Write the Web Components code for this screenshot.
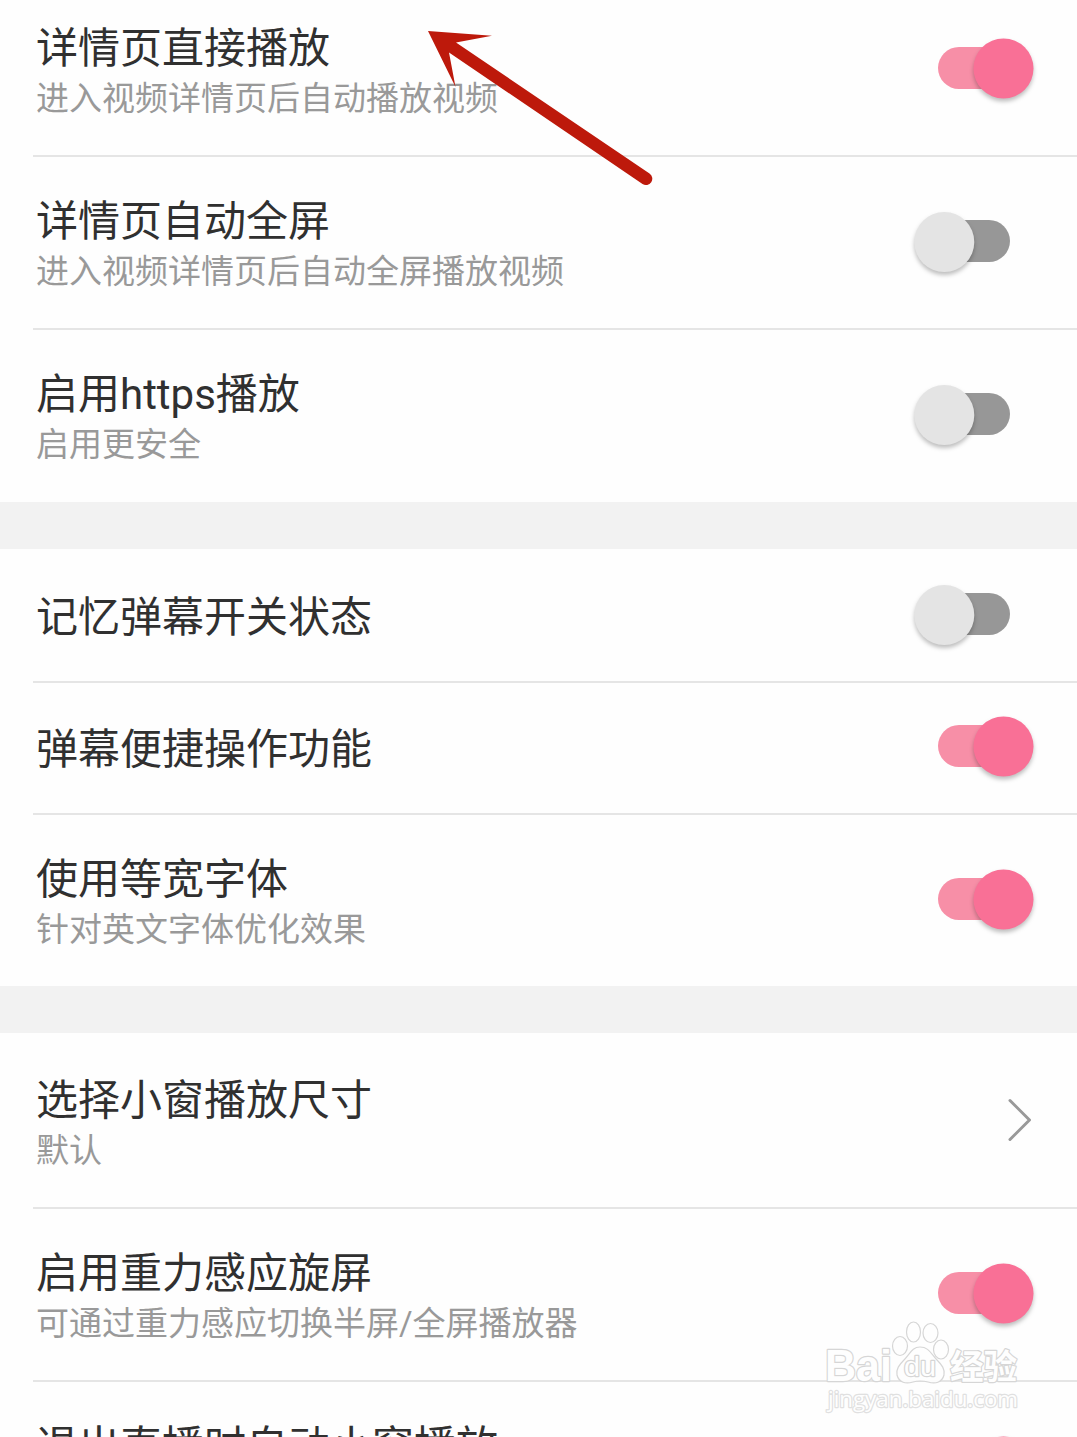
<!DOCTYPE html>
<html lang="zh-CN">
<head>
<meta charset="utf-8">
<title>播放设置</title>
<style>
html,body{margin:0;background:#fefefe}
body{width:1077px;height:1437px;overflow:hidden;position:relative;font-family:Roboto,"Noto Sans CJK SC",sans-serif}
</style>
</head>
<body>
<settings-page>
  <settings-group class="first">
    <settings-row label="详情页直接播放" note="进入视频详情页后自动播放视频"><toggle-switch on></toggle-switch></settings-row>
    <settings-row label="详情页自动全屏" note="进入视频详情页后自动全屏播放视频"><toggle-switch></toggle-switch></settings-row>
    <settings-row label="启用https播放" note="启用更安全" last><toggle-switch></toggle-switch></settings-row>
  </settings-group>
  <settings-group>
    <settings-row label="记忆弹幕开关状态" lead="2"><toggle-switch></toggle-switch></settings-row>
    <settings-row label="弹幕便捷操作功能"><toggle-switch on></toggle-switch></settings-row>
    <settings-row label="使用等宽字体" note="针对英文字体优化效果" last><toggle-switch on></toggle-switch></settings-row>
  </settings-group>
  <settings-group>
    <settings-row label="选择小窗播放尺寸" note="默认" lead="3"><chevron-icon></chevron-icon></settings-row>
    <settings-row label="启用重力感应旋屏" note="可通过重力感应切换半屏/全屏播放器"><toggle-switch on></toggle-switch></settings-row>
    <settings-row label="退出直播时自动小窗播放" last><toggle-switch on></toggle-switch></settings-row>
  </settings-group>
</settings-page>
<pointer-arrow></pointer-arrow>
<site-watermark></site-watermark>
<script>
function define(name, html, setup) {
  const t = document.createElement('template');
  t.innerHTML = html;
  customElements.define(name, class extends HTMLElement {
    constructor() {
      super();
      this.attachShadow({mode: 'open'}).append(t.content.cloneNode(true));
    }
    connectedCallback() { if (setup) setup(this, this.shadowRoot); }
  });
}

define('settings-page', `<style>
:host{display:flex;flex-direction:column;width:1077px;height:1437px;overflow:hidden}
</style><slot></slot>`);

define('settings-group', `<style>
:host{display:flex;flex-direction:column;flex:none;border-top:47px solid #f2f2f2}
:host(.first){border-top:0;margin-top:-16px;padding-bottom:1px}
</style><slot></slot>`);

define('settings-row', `<style>
:host{display:block;flex:none}
.row{display:flex;justify-content:space-between;align-items:flex-start;height:171px}
.text{display:flex;flex-direction:column;padding:40px 0 0 36px;white-space:nowrap}
.title{font-size:42px;line-height:50px;color:#303030}
.note{font-size:33px;line-height:50px;color:#999}
.ctl{padding-top:44px}
.row.single{height:130px}
.single .text{padding-top:42px}
.single .ctl{padding-top:23px}
.line{height:2px;margin-left:33px;background:#e5e5e5}
:host([last]) .line{display:none}
</style>
<div class="row"><div class="text"><div class="title"></div><div class="note"></div></div><div class="ctl"><slot></slot></div></div>
<div class="line"></div>`, (el, root) => {
  const row = root.querySelector('.row');
  const note = el.getAttribute('note');
  root.querySelector('.title').textContent = el.getAttribute('label');
  if (note) root.querySelector('.note').textContent = note;
  else root.querySelector('.note').remove();
  if (!note && !el.hasAttribute('last')) row.classList.add('single');
  row.style.marginTop = (el.getAttribute('lead') || 0) + 'px';
});

define('toggle-switch', `<style>
:host{display:block;width:140px;height:80px;margin-right:33px}
svg{display:block}
.k{filter:drop-shadow(0 3px 2px rgba(0,0,0,.25))}
.on{display:none}
:host([on]) .on{display:inline}
:host([on]) .off{display:none}
</style>
<svg width="140" height="80">
<g class="off"><rect x="34" y="19" width="72" height="42" rx="21" fill="#979797"/><circle class="k" cx="40.300" cy="41" r="30" fill="#e4e4e4"/></g>
<g class="on"><rect x="34" y="19" width="72" height="42" rx="21" fill="#f78fa7"/><circle class="k" cx="99.500" cy="40.500" r="30" fill="#f97096"/></g>
</svg>`);

define('chevron-icon', `<style>
:host{display:block;width:30px;height:80px;margin-right:43px}
svg{display:block}
</style>
<svg width="30" height="80"><path d="M6 20.500L25.500 40L6 59.500" fill="none" stroke="#999" stroke-width="3" stroke-linecap="round" stroke-linejoin="round"/></svg>`);

define('pointer-arrow', `<style>
:host{display:block;position:absolute;left:420px;top:20px;width:240px;height:170px}
svg{display:block}
</style>
<svg width="240" height="170" viewBox="420 20 240 170"><path d="M428 31L492 35.700L456 42.500L649.500 173.500A6.300 6.300 0 0 1 642.500 184L449 52.500L455.500 87Z" fill="#bd190b"/></svg>`);

define('site-watermark', `<style>
:host{display:block;position:absolute;left:817px;top:1312px;width:215px;height:110px}
svg{display:block}
text{paint-order:stroke;stroke-linejoin:round}
</style>
<svg width="215" height="110" viewBox="817 1312 215 110" fill="#fefefe" stroke="#d6d6d6" stroke-width="1.200">
<g fill-opacity=".9">
<ellipse cx="900" cy="1346" rx="7.500" ry="9.500"/><ellipse cx="913.500" cy="1332" rx="7" ry="10"/><ellipse cx="930.500" cy="1333" rx="7.500" ry="9.500"/><ellipse cx="941" cy="1349.500" rx="7.500" ry="9.500"/>
<path d="M920 1347C912 1347 910 1354 904 1360C899 1365 896 1369 897 1375C899 1383 906 1384 913 1382Q920 1380 928 1382C935 1384 942 1383 944 1375C945 1369 942 1365 937 1360C931 1354 929 1347 920 1347Z"/>
</g>
<g stroke-width="2.400">
<text x="825" y="1381" font-family="Liberation Sans, sans-serif" font-weight="700" font-size="44" textLength="67" lengthAdjust="spacingAndGlyphs">Bai</text>
<text x="904" y="1376" font-family="Liberation Sans, sans-serif" font-weight="400" font-size="27" textLength="32" lengthAdjust="spacingAndGlyphs">du</text>
<text x="950" y="1379" font-family="Noto Sans CJK SC, sans-serif" font-weight="700" font-size="34" textLength="67" lengthAdjust="spacingAndGlyphs">经验</text>
<text x="828" y="1407" font-family="Open Sans, sans-serif" font-weight="400" font-size="22" stroke="#e0e0e0" stroke-width="2.400" textLength="190" lengthAdjust="spacingAndGlyphs">jingyan.baidu.com</text>
</g>
</svg>`);
</script>
</body>
</html>
